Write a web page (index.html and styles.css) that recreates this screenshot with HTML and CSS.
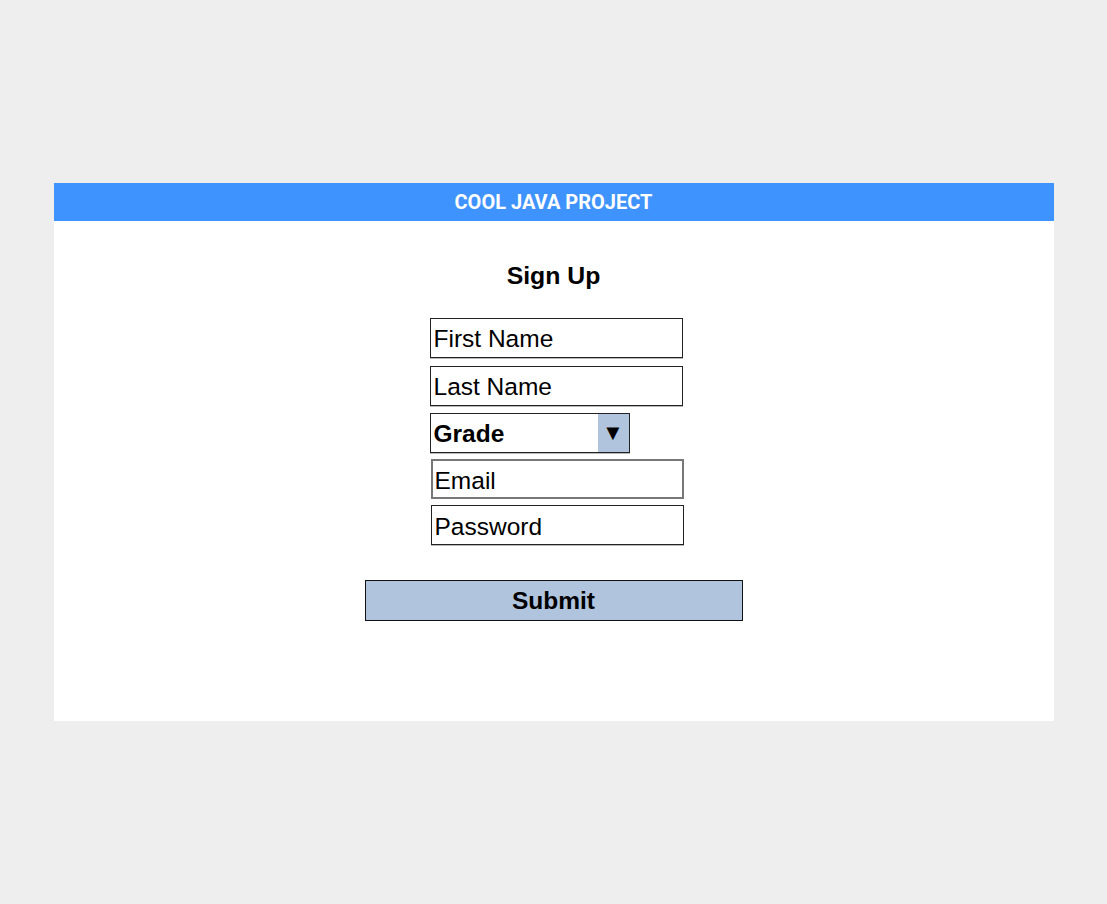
FILE: index.html
```html
<!DOCTYPE html>
<html>
<head>
<meta charset="utf-8">
<link rel="stylesheet" href="styles.css">
</head>
<body>
<div class="card">
  <div class="header">COOL JAVA PROJECT</div>
  <div class="content">
    <h1 class="title">Sign Up</h1>
    <div class="fields">
      <input class="field" type="text" placeholder="First Name">
      <input class="field" type="text" placeholder="Last Name">
      <div class="select"><span class="select-label">Grade</span><span class="select-arrow">▼</span></div>
      <input class="field field-shift field-gray" type="email" placeholder="Email">
      <input class="field field-shift" type="password" placeholder="Password">
    </div>
    <button class="submit" type="button">Submit</button>
  </div>
</div>
</body>
</html>
```

FILE: styles.css
```css
html, body {
  margin: 0;
  padding: 0;
  background: #eeeeee;
}
body {
  font-family: "Liberation Sans", Arial, sans-serif;
}
.card {
  width: 1000px;
  margin: 183px auto 0;
  background: #ffffff;
}
.header {
  height: 38px;
  background: #3f93ff;
  color: #ffffff;
  font-family: Roboto, "Liberation Sans", sans-serif;
  font-weight: 700;
  font-size: 20px;
  line-height: 38px;
  text-align: center;
}
.content {
  padding: 41px 0 100px;
  display: flex;
  flex-direction: column;
}
.title {
  margin: 0;
  text-align: center;
  font-family: "Liberation Sans", Arial, sans-serif;
  font-weight: 700;
  font-size: 24.8px;
  line-height: 28px;
  color: #000;
}
.fields {
  margin: 28px 0 0 376px;
  display: flex;
  flex-direction: column;
  align-items: flex-start;
}
.field {
  box-sizing: border-box;
  width: 253px;
  height: 40px;
  margin: 0;
  padding: 2px 0 0 3px;
  border: 1px solid #222;
  box-shadow: 0 1px 0 #b8b8b8;
  font-family: "Liberation Sans", Arial, sans-serif;
  font-size: 24.5px;
  color: #000;
  background: #fff;
  outline: none;
  margin-bottom: 8px;
}
.field::placeholder {
  color: #000;
  opacity: 1;
}
.field-shift {
  margin-left: 1px;
  margin-bottom: 6px;
  padding-top: 4px;
}
.field-gray {
  border: 2px solid #777;
  padding-left: 2px;
  box-shadow: none;
}
.select {
  box-sizing: border-box;
  width: 200px;
  height: 40px;
  border: 1px solid #222;
  box-shadow: 0 1px 0 #b8b8b8;
  display: flex;
  align-items: stretch;
  margin-top: -1px;
  margin-bottom: 6px;
}
.select-label {
  flex: 1;
  padding: 1px 0 0 3px;
  font-weight: 700;
  font-size: 24.5px;
  line-height: 38px;
}
.select-arrow {
  width: 31px;
  background: #b0c4de;
  text-align: center;
  font-size: 22px;
  line-height: 38px;
}
.submit {
  box-sizing: border-box;
  width: 378px;
  height: 41px;
  margin: 29px auto 0;
  padding: 1px 0 0;
  border: 1px solid #111;
  background: #b0c4de;
  font-family: "Liberation Sans", Arial, sans-serif;
  font-weight: 700;
  font-size: 24.5px;
  color: #000;
}
```
